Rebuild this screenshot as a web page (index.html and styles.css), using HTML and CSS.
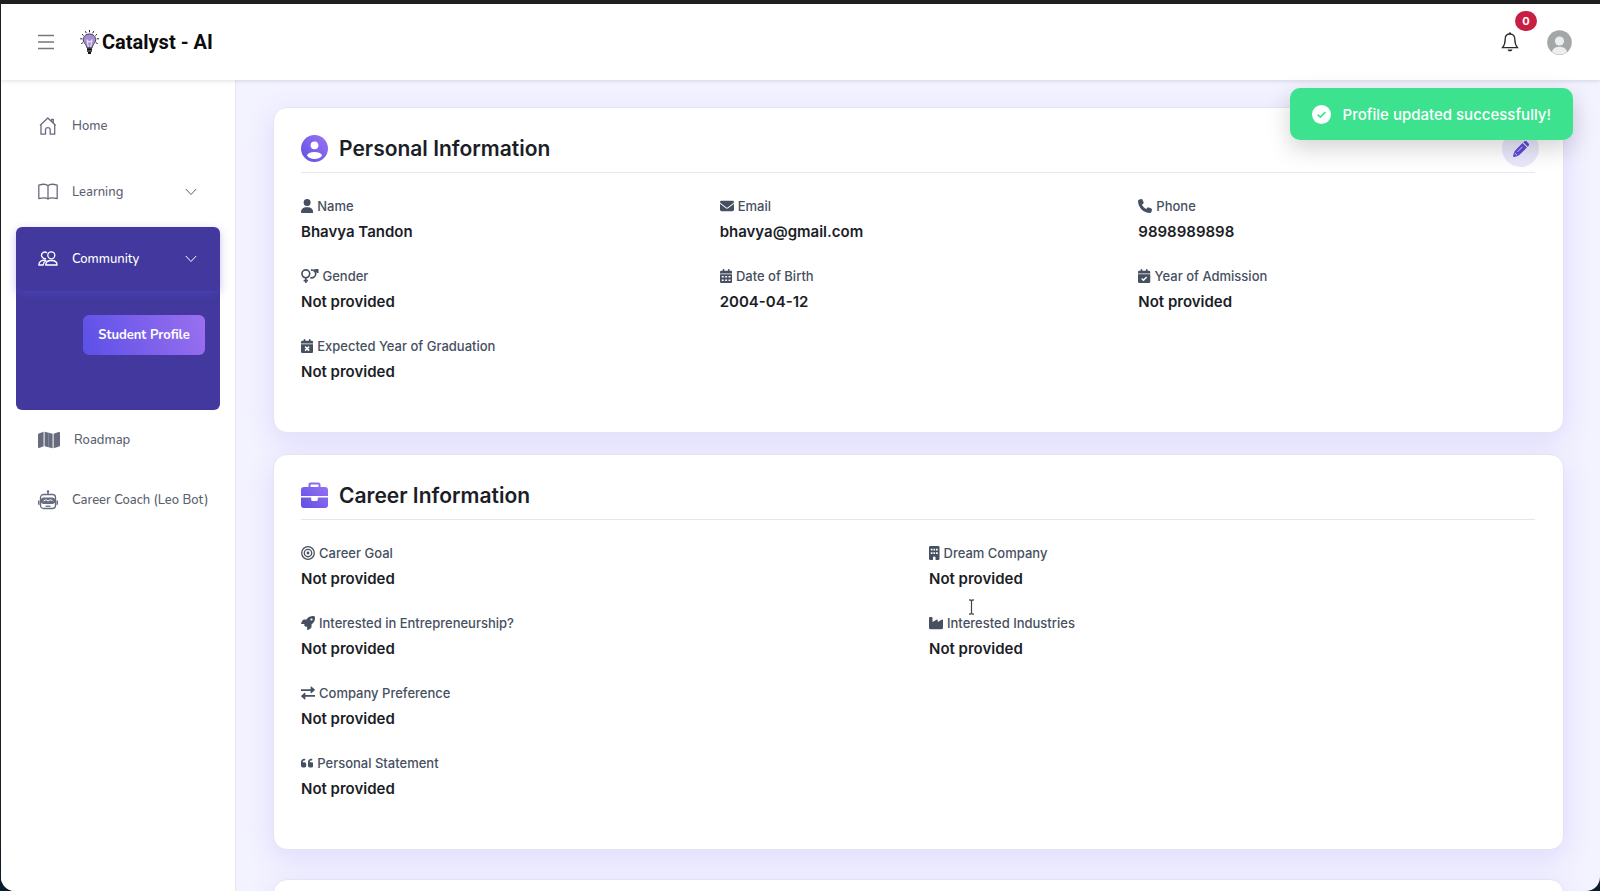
FILE: index.html
```html
<!DOCTYPE html>
<html lang="en">
<head>
    <meta charset="UTF-8">
    <meta name="viewport" content="width=device-width, initial-scale=1.0">
    <title>Catalyst - AI</title>
    <link rel="stylesheet" href="styles.css">
</head>
<body>
<svg class="defs" aria-hidden="true">
    <defs>
        <linearGradient id="violet" x1="1" y1="0" x2="0" y2="1">
            <stop offset="0" stop-color="#9b74f5"/>
            <stop offset="1" stop-color="#5f50e3"/>
        </linearGradient>
    </defs>
</svg>
<div class="app">
    <header class="topbar">
        <button class="icon-btn" aria-label="Toggle menu">
            <svg width="16" height="16" viewBox="0 0 16 16" fill="none" stroke="#77777c" stroke-width="1.3"><path d="M0 1.500h16M0 8h16M0 14.500h16"/></svg>
        </button>
        <a class="brand" href="#">
            <svg width="20" height="25" viewBox="0 0 20 25" fill="none">
                <path d="M9.500 4C5.900 4 3.300 6.500 3.300 9.700c0 2.200 1.200 3.500 2.300 4.900.8 1 1.100 2 1.300 3.200h5.200c.2-1.200.5-2.200 1.300-3.200 1.100-1.400 2.300-2.700 2.300-4.900C15.700 6.500 13.100 4 9.500 4z" fill="#a38fd0" stroke="#413659"/>
                <path d="M7 9.500l1.300 7.500M12 9.500L10.700 17M7 10.500l2.500 1.500 2.500-1.500" stroke="#ecdff8" stroke-width="1.200"/>
                <path d="M7 19.200h5M7 21h5" stroke="#111" stroke-width="1.700"/>
                <path d="M8 22h3v2H8z" fill="#111"/>
                <path d="M9.500 0v2.300M5.300 1.200l1 2M13.700 1.200l-1 2M2 4.200l1.600 1.300M17 4.200l-1.600 1.300M.2 8.800h2.200M16.800 8.800H19M1.300 13.600l1.700-.9M17.700 13.600l-1.700-.9" stroke="#222"/>
            </svg>
            <span>Catalyst - AI</span>
        </a>
        <div class="topbar-right">
            <button class="icon-btn bell" aria-label="Notifications">
                <svg width="18" height="20" viewBox="0 0 18 20" fill="none" stroke="#2b2b2f" stroke-width="1.300">
                    <path d="M9 2C5.700 2 4.200 4.300 4.200 7c0 4-.8 6.500-2.700 8.700h15C14.600 13.500 13.800 11 13.800 7c0-2.700-1.500-5-4.800-5z"/>
                    <path d="M9 .5V2" stroke-width="2"/>
                    <path d="M6.500 17.500h5c-.4 1.300-1.300 1.800-2.500 1.800s-2.100-.5-2.500-1.800z" fill="#2b2b2f" stroke="none"/>
                </svg>
                <span class="badge">0</span>
            </button>
            <button class="icon-btn" aria-label="Account">
                <svg width="25" height="25" viewBox="0 0 25 25">
                    <circle cx="12.5" cy="12.5" r="12.300" fill="#a3a7a7"/>
                    <circle cx="12.5" cy="11" r="4.600" fill="#eceeed"/>
                    <path d="M5 22c.6-3.500 3.800-5.200 7.500-5.200S19.400 18.500 20 22a12.200 12.200 0 0 1-15 0z" fill="#eceeed"/>
                </svg>
            </button>
        </div>
    </header>

    <div class="layout">
        <nav class="sidebar">
            <a class="nav-item" href="#">
                <svg width="20" height="20" viewBox="0 0 20 20" fill="none" stroke="#676b7d" stroke-width="1.300" stroke-linejoin="round">
                    <path d="M2 9.500L9.800 2l7.900 7.500M3 8.800v9.400h4.500v-4.700a2.400 2.400 0 0 1 4.700 0v4.700h4.500V8.800M13.500 5.200V3.400h1.800V7"/>
                </svg>
                <span>Home</span>
            </a>
            <button class="nav-item">
                <svg width="20" height="20" viewBox="0 0 20 20" fill="none" stroke="#676b7d" stroke-width="1.300" stroke-linejoin="round">
                    <path d="M10 3.800v13M10 3.800C8.500 2.200 4.500 2 .8 3.200v13.500c3.700-1 7.500-1 9.200.3 1.700-1.300 5.500-1.300 9.200-.3V3.200C15.500 2 11.500 2.200 10 3.800z"/>
                </svg>
                <span>Learning</span>
                <svg class="chevron" width="12" height="8" viewBox="0 0 12 8" fill="none" stroke="currentColor"><path d="M.8 1L6 6.500 11.200 1"/></svg>
            </button>
            <div class="nav-group">
                <button class="nav-item active">
                    <svg width="20" height="20" viewBox="0 0 20 20" fill="none" stroke="#fff" stroke-width="1.300" stroke-linejoin="round">
                        <circle cx="13.300" cy="6.300" r="3.500"/>
                        <path d="M7.700 16c0-3 2.500-4.500 5.700-4.500s5.700 1.500 5.700 4.500z"/>
                        <path d="M9 4a3.200 3.200 0 1 0-1 5.300M8 11.500C3.800 10.500 1 12.500.8 16h4.500c.1-1.900 1-3.500 2.700-4.500z"/>
                    </svg>
                    <span>Community</span>
                    <svg class="chevron" width="12" height="8" viewBox="0 0 12 8" fill="none" stroke="currentColor"><path d="M.8 1L6 6.500 11.200 1"/></svg>
                </button>
                <a class="sub-item" href="#">Student Profile</a>
            </div>
            <a class="nav-item short" href="#">
                <svg width="22" height="18" viewBox="0 0 22 18" fill="#676b7d">
                    <path d="M0 3.600C0 3 .3 2.600.8 2.400L5.600.8v14.400L1.200 16.900C.6 17.100 0 16.700 0 16zM6.600.8l8 2v14.400l-8-2zM15.600 2.800L20.600 1c.7-.2 1.400.2 1.400.9v12.500c0 .5-.3.9-.8 1.100l-5.600 1.700z"/>
                    <path d="M10.600 1.800v14.400" stroke="#a9abb6" stroke-width=".500"/>
                </svg>
                <span>Roadmap</span>
            </a>
            <a class="nav-item short" href="#">
                <svg width="20" height="20" viewBox="0 0 20 20" fill="none" stroke="#676b7d" stroke-width="1.300">
                    <path d="M10 1v3.500" stroke-width="1.400"/>
                    <circle cx="10" cy="1.500" r="1.200" fill="#676b7d" stroke="none"/>
                    <path d="M5.500 4.500h9a3 3 0 0 1 3 3v8a3 3 0 0 1-3 3h-9a3 3 0 0 1-3-3v-8a3 3 0 0 1 3-3z"/>
                    <path d="M0 10.500h1.500v4.500H1a1 1 0 0 1-1-1zM20 10.500h-1.500v4.500h.5a1 1 0 0 0 1-1zM6 7.500h8a3.200 3.200 0 0 1 0 6.400H6a3.200 3.200 0 0 1 0-6.400z" fill="#676b7d" stroke="none"/>
                    <path d="M5.500 11l2.500-1.300 2 1.300 2.200-1.300 2.300 1" stroke="#fff" stroke-width="1"/>
                    <path d="M7.500 16.200h5"/>
                </svg>
                <span>Career Coach (Leo Bot)</span>
            </a>
        </nav>

        <main class="content">
            <section class="card">
                <div class="card-head">
                    <svg width="27" height="27" viewBox="0 0 27 27">
                        <circle cx="13.5" cy="13.5" r="13.500" fill="url(#violet)"/>
                        <circle cx="13.5" cy="10.300" r="3.900" fill="#fff"/>
                        <path d="M6 20.500c.5-2.300 3.300-3.500 7.500-3.500s7 1.200 7.500 3.500c-1 2.200-4 3.400-7.500 3.400S7 22.700 6 20.500z" fill="#fff"/>
                    </svg>
                    <h2>Personal Information</h2>
                    <button class="edit-btn" aria-label="Edit profile">
                        <svg width="16" height="16" viewBox="0 0 16 16" fill="#5a4bd8">
                            <path d="M10.300 1.300L11 .6a1.900 1.900 0 0 1 2.700 0l1.700 1.700a1.900 1.900 0 0 1 0 2.700l-.7.700zM9.500 2.100l4.400 4.400-7.600 7.600-1.500.9-3.700 1a.8.800 0 0 1-1-1l1-3.700.9-1.600z"/>
                            <path d="M4.500 10.800l5-5M1.800 12l2.200 2.200" fill="none" stroke="#e9e8fb" stroke-width=".900"/>
                        </svg>
                    </button>
                </div>
                <dl class="fields three">
                    <div class="field">
                        <dt><svg viewBox="0 0 448 512"><path d="M224 256A128 128 0 1 0 224 0a128 128 0 1 0 0 256zm-45.700 48C79.800 304 0 383.800 0 482.300 0 498.700 13.300 512 29.700 512h388.600c16.400 0 29.700-13.300 29.700-29.700C448 383.800 368.200 304 269.700 304z"/></svg>Name</dt>
                        <dd>Bhavya Tandon</dd>
                    </div>
                    <div class="field">
                        <dt><svg viewBox="0 0 512 512"><path d="M48 64C21.500 64 0 85.500 0 112c0 15.100 7.100 29.300 19.200 38.400l217.600 163.200c11.400 8.500 27 8.500 38.400 0l217.600-163.200c12.100-9.100 19.200-23.300 19.200-38.400 0-26.500-21.500-48-48-48zM0 176v208c0 35.300 28.700 64 64 64h384c35.300 0 64-28.700 64-64V176L294.400 339.200c-22.800 17.100-54 17.100-76.800 0z"/></svg>Email</dt>
                        <dd>bhavya@gmail.com</dd>
                    </div>
                    <div class="field">
                        <dt><svg viewBox="0 0 512 512"><path d="M164.900 24.600c-7.700-18.600-28-28.500-47.400-23.200l-88 24C12.100 30.200 0 46 0 64c0 247.400 200.600 448 448 448 18 0 33.800-12.100 38.600-29.500l24-88c5.300-19.400-4.600-39.700-23.200-47.400l-96-40c-16.300-6.800-35.200-2.100-46.300 11.600L304.700 368C234.300 334.700 177.300 277.700 144 207.300L193.300 167c13.700-11.200 18.400-30 11.600-46.300z"/></svg>Phone</dt>
                        <dd>9898989898</dd>
                    </div>
                    <div class="field">
                        <dt><svg class="line" viewBox="0 0 640 512" stroke-width="60"><circle cx="176" cy="176" r="142"/><path d="M176 318v194M96 425h160M340 310a142 142 0 1 0 20-268M512 140L610 36M490 30h120v120"/></svg>Gender</dt>
                        <dd>Not provided</dd>
                    </div>
                    <div class="field">
                        <dt><svg viewBox="0 0 448 512"><path fill-rule="evenodd" d="M96 32a32 32 0 0 1 64 0v32h128V32a32 32 0 0 1 64 0v32h48a48 48 0 0 1 48 48v48H0v-48a48 48 0 0 1 48-48h48zM0 192h448v272a48 48 0 0 1-48 48H48a48 48 0 0 1-48-48zm64 64v56h72v-56zm124 0v56h72v-56zm124 0v56h72v-56zM64 384v56h72v-56zm124 0v56h72v-56zm124 0v56h72v-56z"/></svg>Date of Birth</dt>
                        <dd>2004-04-12</dd>
                    </div>
                    <div class="field">
                        <dt><svg viewBox="0 0 448 512"><path d="M96 32a32 32 0 0 1 64 0v32h128V32a32 32 0 0 1 64 0v32h48a48 48 0 0 1 48 48v48H0v-48a48 48 0 0 1 48-48h48zM0 192h448v272a48 48 0 0 1-48 48H48a48 48 0 0 1-48-48z"/><path d="M135 350l65 62 115-120" fill="none" stroke="#fff" stroke-width="52"/></svg>Year of Admission</dt>
                        <dd>Not provided</dd>
                    </div>
                    <div class="field">
                        <dt><svg viewBox="0 0 448 512"><path d="M96 32a32 32 0 0 1 64 0v32h128V32a32 32 0 0 1 64 0v32h48a48 48 0 0 1 48 48v48H0v-48a48 48 0 0 1 48-48h48zM0 192h448v272a48 48 0 0 1-48 48H48a48 48 0 0 1-48-48z"/><path d="M150 278l148 148M298 278L150 426" fill="none" stroke="#fff" stroke-width="56"/></svg>Expected Year of Graduation</dt>
                        <dd>Not provided</dd>
                    </div>
                </dl>
            </section>

            <section class="card">
                <div class="card-head">
                    <svg width="27" height="27" viewBox="0 0 27 27" fill="url(#violet)">
                        <path fill-rule="evenodd" d="M7.500 5V2.500A2 2 0 0 1 9.500.500h8a2 2 0 0 1 2 2V5H24a3 3 0 0 1 3 3v6H0V8a3 3 0 0 1 3-3zM9.500 5h8V2.500h-8zM0 15.500h10.200v2a1.500 1.500 0 0 0 1.500 1.500h3.600a1.500 1.500 0 0 0 1.500-1.500v-2H27v7.500a3 3 0 0 1-3 3H3a3 3 0 0 1-3-3z"/>
                    </svg>
                    <h2>Career Information</h2>
                </div>
                <dl class="fields two">
                    <div class="field">
                        <dt><svg class="line" viewBox="0 0 512 512" stroke-width="48"><circle cx="256" cy="256" r="230"/><circle cx="256" cy="256" r="136"/><circle cx="256" cy="256" r="28"/></svg>Career Goal</dt>
                        <dd>Not provided</dd>
                    </div>
                    <div class="field">
                        <dt><svg viewBox="0 0 384 512"><path fill-rule="evenodd" d="M48 0h288a48 48 0 0 1 48 48v416a48 48 0 0 1-48 48h-96v-80a48 48 0 0 0-96 0v80H48a48 48 0 0 1-48-48V48A48 48 0 0 1 48 0zm16 96v64h64V96zm96 0v64h64V96zm96 0v64h64V96zM64 224v64h64v-64zm96 0v64h64v-64zm96 0v64h64v-64z"/></svg>Dream Company</dt>
                        <dd>Not provided</dd>
                    </div>
                    <div class="field">
                        <dt><svg viewBox="0 0 512 512"><path d="M156.600 384.900L125.700 354c-8.500-8.500-11.500-20.800-7.700-32.200 3-8.900 7-20.500 11.800-33.800H24c-8.600 0-16.600-4.600-20.900-12.100s-4.200-16.700.2-24.100l52.500-88.500c13-21.900 36.500-35.300 61.900-35.300H200c2.400-4 4.800-7.700 7.200-11.300C289.100-4.100 411.100-8.100 483.900 5.300c11.600 2.100 20.600 11.200 22.800 22.800 13.400 72.900 9.300 194.800-111.400 276.700-3.500 2.400-7.300 4.800-11.300 7.200v82.300c0 25.400-13.400 49-35.300 61.900l-88.500 52.500c-7.400 4.400-16.600 4.500-24.100.2s-12.100-12.200-12.100-20.900V380.800c-14.100 4.900-26.400 8.900-35.700 11.900-11.200 3.600-23.400.5-31.700-7.800zM384 168a40 40 0 1 0 0-80 40 40 0 1 0 0 80z"/></svg>Interested in Entrepreneurship?</dt>
                        <dd>Not provided</dd>
                    </div>
                    <div class="field">
                        <dt><svg viewBox="0 0 512 512"><path d="M32 32C14.300 32 0 46.300 0 64v368c0 26.500 21.500 48 48 48h416c26.500 0 48-21.500 48-48V152c0-18.200-19.400-29.700-35.400-21.100L320 215.400V152c0-18.200-19.400-29.700-35.400-21.100L128 215.400V64c0-17.700-14.300-32-32-32z"/></svg>Interested Industries</dt>
                        <dd>Not provided</dd>
                    </div>
                    <div class="field wide">
                        <dt><svg viewBox="0 0 512 512"><path d="M0 118h352V32c0-16 18-22 29-13l122 108c10 9 10 21 0 30L381 265c-11 9-29 3-29-13v-70H0zM512 330H160v-70c0-16-18-22-29-13L9 355c-10 9-10 21 0 30l122 108c11 9 29 3 29-13v-86h352z"/></svg>Company Preference</dt>
                        <dd>Not provided</dd>
                    </div>
                    <div class="field wide">
                        <dt><svg viewBox="0 0 448 512"><path d="M0 216C0 149.700 53.700 96 120 96h8a32 32 0 0 1 0 64h-8c-30.900 0-56 25.100-56 56v8h64a64 64 0 0 1 64 64v64a64 64 0 0 1-64 64H64a64 64 0 0 1-64-64zm256 0c0-66.300 53.700-120 120-120h8a32 32 0 0 1 0 64h-8c-30.900 0-56 25.100-56 56v8h64a64 64 0 0 1 64 64v64a64 64 0 0 1-64 64h-64a64 64 0 0 1-64-64z"/></svg>Personal Statement</dt>
                        <dd>Not provided</dd>
                    </div>
                </dl>
            </section>

            <section class="card next"></section>
        </main>
    </div>
</div>

<div class="toast" role="status">
    <svg width="19" height="19" viewBox="0 0 19 19"><circle cx="9.500" cy="9.500" r="9.500" fill="#fff"/><path d="M5.700 9.600l2.700 2.500 5-5" fill="none" stroke="#3ce28d" stroke-width="1.700"/></svg>
    <span>Profile updated successfully!</span>
</div>
<svg class="text-cursor" width="7" height="16" viewBox="0 0 7 16" fill="none" stroke="#444" stroke-width="1.200" aria-hidden="true"><path d="M1 .8c1.500 0 2.500.4 2.500 1.500v11.400c0 1.100-1 1.500-2.500 1.500M6 .8c-1.500 0-2.500.4-2.500 1.500M6 15.200c-1.500 0-2.500-.4-2.500-1.500"/></svg>
</body>
</html>
```
FILE: styles.css
```css
* {
    box-sizing: border-box;
}

body {
    margin: 0;
    height: 100vh;
    overflow: hidden;
    padding: 4px 0 0 1px;
    background: linear-gradient(#1f1e20 90%, #0a1c2c);
    font-family: Inter, "Liberation Sans", sans-serif;
    color: #1b1e27;
}

button {
    font: inherit;
    color: inherit;
    border: none;
    background: none;
    padding: 0;
    cursor: pointer;
}

a {
    color: inherit;
    text-decoration: none;
}

.defs {
    position: absolute;
    width: 0;
    height: 0;
}

.app {
    display: flex;
    flex-direction: column;
    height: 100%;
    overflow: hidden;
    background: #f3f2ff;
    border-radius: 0 0 14px 14px;
}

/* top bar */
.topbar {
    display: flex;
    align-items: center;
    flex: none;
    height: 76px;
    padding: 0 28px 0 37px;
    background: #fff;
    box-shadow: 0 1px 4px rgba(40, 40, 80, 0.15);
    z-index: 2;
}

.icon-btn {
    display: flex;
    position: relative;
}

.brand {
    display: flex;
    align-items: center;
    gap: 2px;
    margin-left: 26px;
    font: 700 20px Roboto, "Liberation Sans", sans-serif;
    color: #0c0c0c;
}

.topbar-right {
    display: flex;
    align-items: center;
    gap: 28px;
    margin-left: auto;
}

.badge {
    position: absolute;
    left: 14px;
    top: -21px;
    width: 22px;
    line-height: 20px;
    border-radius: 10px;
    background: #c81e42;
    color: #fff;
    font-size: 11px;
    font-weight: 700;
    text-align: center;
}

.layout {
    display: flex;
    flex: 1;
    min-height: 0;
}

/* sidebar */
.sidebar {
    flex: none;
    width: 235px;
    padding: 13px 15px;
    background: #fff;
    border-right: 1px solid #e8e8f2;
    font-family: Nunito, "Noto Sans", sans-serif;
    font-size: 13px;
    font-weight: 500;
    color: #5b5f70;
}

.nav-item {
    display: flex;
    align-items: center;
    gap: 14px;
    width: 100%;
    height: 66px;
    padding: 0 23px 0 22px;
    white-space: nowrap;
}

.nav-item.short {
    height: 60px;
    padding-right: 0;
}

.nav-item.active {
    height: 64px;
    border-radius: 6px;
    box-shadow: 0 3px 8px rgba(90, 80, 220, 0.35);
    color: #fff;
}

.chevron {
    margin-left: auto;
}

.nav-group {
    margin-top: 2px;
    height: 183px;
    border-radius: 6px;
    background: #42389d;
}

.sub-item {
    display: block;
    width: 122px;
    margin: 24px 15px 0 auto;
    border-radius: 6px;
    background: linear-gradient(70deg, #5b50e7, #9b70ef);
    color: #fff;
    font-weight: 700;
    line-height: 40px;
    text-align: center;
}

/* cards */
.content {
    flex: 1;
    min-width: 0;
    padding: 27px 36px 0 37px;
}

.card {
    margin-bottom: 21px;
    padding: 26px 28px 48px 27px;
    border: 1px solid #e5e5f0;
    border-radius: 14px;
    background: #fff;
    box-shadow: 0 8px 28px rgba(100, 85, 240, 0.15);
}

.card.next {
    height: 100px;
    margin-top: 29px;
}

.card-head {
    display: flex;
    align-items: center;
    gap: 11px;
    height: 39px;
    padding-bottom: 9px;
    border-bottom: 1px solid #e4e7ee;
}

.card-head h2 {
    margin: 0;
    font-size: 21px;
    font-weight: 600;
    line-height: 28px;
}

.edit-btn {
    display: flex;
    align-items: center;
    justify-content: center;
    width: 37px;
    height: 37px;
    margin: 0 -4px 0 auto;
    border-radius: 50%;
    background: #e9e8fb;
}

.fields {
    display: grid;
    gap: 22px;
    margin: 23px 0 0;
}

.three {
    grid-template-columns: repeat(3, 1fr);
}

.two {
    grid-template-columns: repeat(2, 1fr);
}

.wide {
    grid-column: 1 / -1;
}

.field dt {
    display: flex;
    align-items: center;
    gap: 4px;
    margin-bottom: 4px;
    font-size: 13px;
    font-weight: 500;
    line-height: 20px;
    color: #475061;
}

.field dt svg {
    height: 14px;
    fill: #475061;
}

.field dt .line {
    fill: none;
    stroke: #475061;
}

.field dd {
    margin: 0;
    font-size: 15px;
    font-weight: 600;
    line-height: 24px;
}

/* overlays */
.toast {
    position: absolute;
    top: 88px;
    right: 27px;
    display: flex;
    align-items: center;
    gap: 12px;
    height: 52px;
    padding: 0 22px;
    border-radius: 10px;
    background: #3ce28d;
    box-shadow: 0 8px 24px rgba(0, 0, 0, 0.18);
    color: #fff;
    font-size: 15px;
    font-weight: 500;
    z-index: 3;
}

.text-cursor {
    position: absolute;
    left: 968px;
    top: 599px;
}
```
